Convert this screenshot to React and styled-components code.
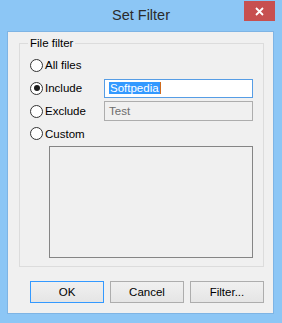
import React from 'react'
import styled, { createGlobalStyle } from 'styled-components'

const GlobalStyle = createGlobalStyle`
    html, body {
        margin: 0;
        padding: 0;
        background: #8cc6f5;
    }
    body {
        font-family: "Segoe UI", "Liberation Sans", Arial, sans-serif;
        font-size: 11.5px;
        color: #000;
    }
`

const Window = styled.div`
    width: 282px;
    height: 323px;
    box-sizing: border-box;
    background: #8cc6f5;
    display: flex;
    flex-direction: column;
`

const TitleBar = styled.div`
    height: 31px;
    display: flex;
    align-items: flex-start;
    position: relative;
`

const Title = styled.div`
    flex: 1;
    text-align: center;
    font-size: 14.5px;
    line-height: 30px;
    color: #2b2b2b;
`

const CloseButton = styled.div`
    position: absolute;
    top: 1px;
    right: 7px;
    width: 31px;
    height: 20px;
    background: #c75050;
    display: flex;
    align-items: center;
    justify-content: center;
`

const Client = styled.div`
    margin: 0 8px 9px 7px;
    flex: 1;
    background: #f0f0f0;
    border: 1px solid #7eb4e4;
    display: flex;
    flex-direction: column;
`

const GroupBox = styled.div`
    position: relative;
    margin: 11px 9px 0 11px;
    height: 224px;
    box-sizing: border-box;
    border: 1px solid #dcdcdc;
    padding: 11px 10px 0 10px;
`

const GroupLabel = styled.span`
    position: absolute;
    top: -8px;
    left: 8px;
    padding: 0 2px;
    background: #f0f0f0;
    line-height: 15px;
`

const Options = styled.div`
    display: grid;
    grid-template-columns: 74px 149px;
    grid-template-rows: 20px 20px 20px 19px;
    row-gap: 3px;
    align-items: center;
`

const RadioRow = styled.label`
    display: flex;
    align-items: center;
    gap: 2px;
    grid-column: 1;
`

const RadioCircle = styled.span`
    width: 13px;
    height: 13px;
    box-sizing: border-box;
    border-radius: 50%;
    border: 1px solid #333;
    background: #fff;
    display: flex;
    align-items: center;
    justify-content: center;
    &::after {
        content: '';
        width: 6px;
        height: 6px;
        border-radius: 50%;
        background: ${props => (props.checked ? '#1a1a1a' : 'transparent')};
    }
`

const TextBox = styled.div`
    grid-column: 2;
    height: ${props => (props.disabled ? '20px' : '19px')};
    box-sizing: border-box;
    border: 1px solid ${props => (props.disabled ? '#adadad' : '#569de5')};
    background: ${props => (props.disabled ? '#f0f0f0' : '#fff')};
    color: ${props => (props.disabled ? '#6d6d6d' : '#000')};
    display: flex;
    align-items: center;
    padding-left: 4px;
`

const Selected = styled.span`
    background: #3399ff;
    color: #fff;
    line-height: 12px;
    padding: 0 1px;
    border-right: 1px solid #d06a1c;
`

const ListBox = styled.div`
    margin: 3px 0 0 19px;
    width: 204px;
    height: 112px;
    box-sizing: border-box;
    border: 1px solid #858585;
    background: #f0f0f0;
`

const ButtonRow = styled.div`
    display: flex;
    gap: 6px;
    margin: 14px 0 0 22px;
`

const Button = styled.button`
    width: 74px;
    height: 22px;
    box-sizing: border-box;
    font: inherit;
    color: #000;
    border: 1px solid ${props => (props.primary ? '#3399ff' : '#adadad')};
    background: linear-gradient(#f0f0f0, #e5e5e5);
    padding: 0;
`

const options = [
    { label: 'All files' },
    { label: 'Include', checked: true, field: 'Softpedia' },
    { label: 'Exclude', field: 'Test', disabled: true },
    { label: 'Custom' },
]

const App = () => (
    <Window>
        <GlobalStyle />
        <TitleBar>
            <Title>Set Filter</Title>
            <CloseButton>
                <svg width="9" height="9" viewBox="0 0 9 9">
                    <path d="M1 1 L8 8 M8 1 L1 8" stroke="#fff" strokeWidth="1.8" />
                </svg>
            </CloseButton>
        </TitleBar>
        <Client>
            <GroupBox>
                <GroupLabel>File filter</GroupLabel>
                <Options>
                    {options.map(o => (
                        <React.Fragment key={o.label}>
                            <RadioRow>
                                <RadioCircle checked={o.checked} />
                                {o.label}
                            </RadioRow>
                            {o.field && (
                                <TextBox disabled={o.disabled}>
                                    {o.disabled ? o.field : <Selected>{o.field}</Selected>}
                                </TextBox>
                            )}
                        </React.Fragment>
                    ))}
                </Options>
                <ListBox />
            </GroupBox>
            <ButtonRow>
                <Button primary>OK</Button>
                <Button>Cancel</Button>
                <Button>Filter...</Button>
            </ButtonRow>
        </Client>
    </Window>
)

export default App
